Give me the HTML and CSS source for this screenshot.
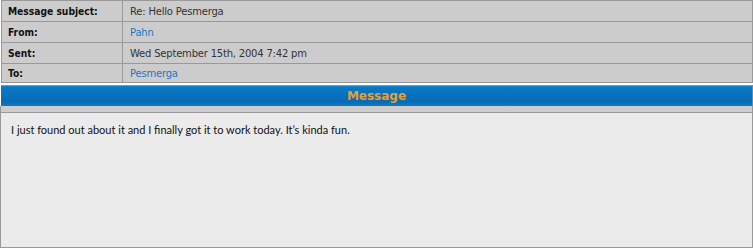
FILE: index.html
```html
<!DOCTYPE html>
<html>
<head>
<meta charset="utf-8">
<link rel="stylesheet" href="styles.css">
</head>
<body>
<div class="page">
  <table class="meta">
    <tr><th>Message subject:</th><td>Re: Hello Pesmerga</td></tr>
    <tr><th>From:</th><td><a class="link" href="#">Pahn</a></td></tr>
    <tr><th>Sent:</th><td>Wed September 15th, 2004 7:42 pm</td></tr>
    <tr class="last"><th>To:</th><td><a class="link" href="#">Pesmerga</a></td></tr>
  </table>
  <div class="panel">
    <div class="bar">Message</div>
    <div class="strip"></div>
    <div class="body">I just found out about it and I finally got it to work today. It’s kinda fun.</div>
  </div>
</div>
</body>
</html>
```
FILE: styles.css
```css
html, body { margin: 0; padding: 0; background: #ffffff; }
.page { width: 753px; height: 248px; padding-left: 1px; box-sizing: border-box; }
.meta {
  width: 752px;
  border-collapse: collapse;
  background: #cccccc;
  font-family: "DejaVu Sans", Verdana, sans-serif;
  font-size: 10px;
  color: #222;
}
.meta th, .meta td {
  border: 1px solid #999999;
  height: 20px;
  padding: 0 0 0 6px;
  text-align: left;
}
.meta .last th, .meta .last td { height: 18px; }
.meta th { width: 114px; font-weight: bold; color: #111; font-family: "DejaVu Sans Condensed", "DejaVu Sans", sans-serif; font-size: 10.2px; }
.meta td { padding-left: 7px; color: #333; letter-spacing: -0.2px; }
.link { color: #1b78c0; text-decoration: none; }
.panel { margin-top: 2px; width: 752px; }
.bar {
  height: 21px;
  box-sizing: border-box;
  background: linear-gradient(#4aa6e4 0, #4aa6e4 1px, #1583cc 1px, #0a76c2 3px, #066cb6 17px, #1679c0 21px);
  border-right: 1px solid #5b8fb5;
  color: #e59f35;
  font-family: "DejaVu Sans", Verdana, sans-serif;
  font-weight: bold;
  font-size: 12px;
  line-height: 22px;
  text-align: center;
}
.strip { height: 6px; background: #cccccc; border-bottom: 1px solid #999999; border-right: 1px solid #999; border-left: 1px solid #999; margin-left: -1px; }
.body {
  height: 135px;
  box-sizing: border-box;
  background: #ebebeb;
  border: 1px solid #999999;
  border-top: none;
  padding: 10px 0 0 10px;
  font-family: Lato, "Open Sans", sans-serif;
  font-size: 11px;
  color: #111;
  margin-left: -1px;
}
```
